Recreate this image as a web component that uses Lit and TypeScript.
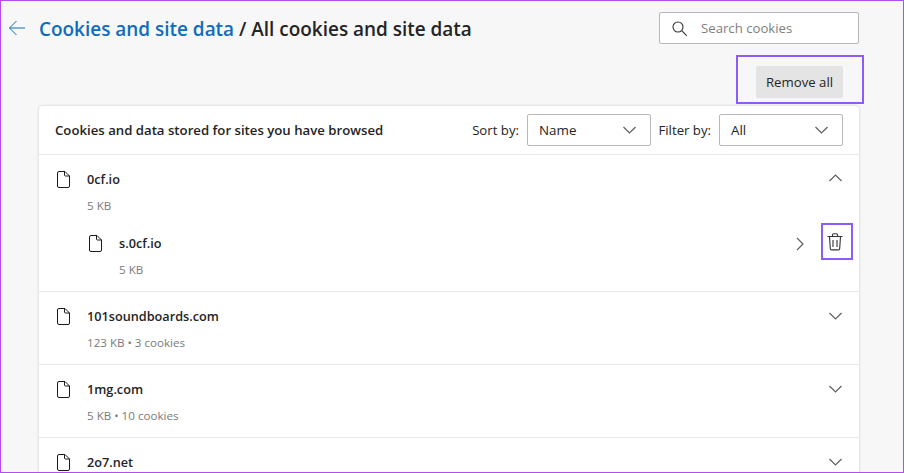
import { LitElement, html, css } from "lit";
import { customElement } from "lit/decorators.js";

const file = html`<svg class="file" width="13" height="17" viewBox="0 0 13 17" fill="none" stroke="#1a1a1a" stroke-width="1"><path d="M.5 2A1.500 1.500 0 0 1 2 .5h6l4.500 4.500v10a1.500 1.500 0 0 1-1.500 1.500H2A1.500 1.500 0 0 1 .5 15z"/><path d="M7.500 .5V4a1 1 0 0 0 1 1h4"/></svg>`;
const chevron = (d: string) => html`<svg width="14" height="14" viewBox="0 0 14 14" fill="none" stroke="#5f5f5f" stroke-width="1.2"><path d=${d}/></svg>`;
const DOWN = "M.5 4 6.500 10l6-6";
const UP = "M.5 10 6.500 4l6 6";
const RIGHT = "M4 1 10 7l-6 6";

const rows = [
  { name: "101soundboards.com", meta: "123 KB • 3 cookies" },
  { name: "1mg.com", meta: "5 KB • 10 cookies" },
  { name: "2o7.net", meta: "" },
];

@customElement("app-root")
export class AppRoot extends LitElement {
  static styles = css`
    :host {
      display: block;
      width: 904px;
      height: 473px;
      box-sizing: border-box;
      border: 1px solid #b44cf0;
      background: #f7f7f7;
      overflow: hidden;
      position: relative;
      font-family: "Open Sans", "Noto Sans", sans-serif;
      color: #242424;
    }
    .top {
      display: flex;
      align-items: center;
      height: 56px;
      padding: 0 44px 0 7px;
    }
    .back { display: flex; margin-right: 13px; margin-top: -2px; }
    h1 {
      flex: 1;
      margin: 0 0 1px;
      font-size: 18.95px;
      font-weight: 600;
      white-space: nowrap;
    }
    h1 a { color: #0f6cbd; }
    .search {
      width: 200px;
      height: 32px;
      box-sizing: border-box;
      border: 1px solid #b8b8b8;
      border-radius: 2px;
      background: #fff;
      display: flex;
      align-items: center;
      gap: 14px;
      padding-left: 12px;
      font-size: 13.2px;
      color: #808080;
      margin-top: -2px;
    }
    .actions {
      display: flex;
      justify-content: flex-end;
      height: 49px;
      padding: 9px 60px 0 0;
      box-sizing: border-box;
    }
    .remove {
      width: 87px;
      height: 32px;
      background: #e4e4e4;
      border-radius: 2px;
      display: flex;
      align-items: center;
      justify-content: center;
      font-size: 13.2px;
    }
    .card {
      margin: 0 44px 0 38px;
      background: #fff;
      border-radius: 4px 4px 0 0;
      box-shadow: 0 0 3px rgba(0, 0, 0, 0.18);
    }
    .head {
      height: 48px;
      display: flex;
      align-items: center;
      padding: 0 16px;
      border-bottom: 1px solid #e8e8e8;
      font-size: 13.2px;
    }
    .head b { flex: 1; font-weight: 600; }
    .lbl { margin-right: 8px; }
    .select {
      width: 124px;
      height: 32px;
      box-sizing: border-box;
      border: 1px solid #b8b8b8;
      border-radius: 2px;
      display: flex;
      align-items: center;
      justify-content: space-between;
      padding: 0 13px 0 11px;
      margin-right: 7.5px;
      font-size: 13.4px;
    }
    .select:last-child { margin-right: 0; }
    .row {
      border-bottom: 1px solid #e8e8e8;
      padding: 0 16px;
    }
    .line {
      display: flex;
      align-items: flex-start;
      height: 72px;
      box-sizing: border-box;
      padding-top: 15px;
    }
    .line.first { height: 64px; }
    .line.sub { padding-left: 32px; }
    .file { flex: none; margin: 1px 17px 0 2px; }
    .text { flex: 1; }
    .name { font-size: 12.7px; font-weight: 600; line-height: 18px; }
    .meta { font-size: 11.6px; color: #7a7a7a; line-height: 15px; margin-top: 10px; }
    .icons { display: flex; align-items: center; gap: 20px; margin-top: 2px; }
    .first .icons { margin-top: 1px; }
    .trash { margin-top: -3px; }
    .mark {
      position: absolute;
      box-sizing: border-box;
      border: 2px solid #8b5cf6;
    }
    .m1 { left: 735px; top: 54px; width: 128px; height: 49px; }
    .m2 { left: 820px; top: 222px; width: 32px; height: 37px; }
  `;

  render() {
    return html`
      <div class="top">
        <span class="back"><svg width="18" height="16" viewBox="0 0 18 16" fill="none" stroke="#0f6cbd" stroke-width="1"><path d="M17 8H1.500M8.500 1 1.500 8l7 7"/></svg></span>
        <h1><a>Cookies and site data</a> / All cookies and site data</h1>
        <div class="search">
          <svg width="15" height="15" viewBox="0 0 15 15" fill="none" stroke="#333" stroke-width="1.1"><circle cx="6" cy="6" r="5"/><path d="m9.700 9.700 5 5"/></svg>
          <span>Search cookies</span>
        </div>
      </div>
      <div class="actions"><div class="remove">Remove all</div></div>
      <div class="card">
        <div class="head">
          <b>Cookies and data stored for sites you have browsed</b>
          <span class="lbl">Sort by:</span>
          <div class="select"><span>Name</span>${chevron(DOWN)}</div>
          <span class="lbl">Filter by:</span>
          <div class="select"><span>All</span>${chevron(DOWN)}</div>
        </div>
        <div class="row">
          <div class="line first">
            ${file}
            <div class="text"><div class="name">0cf.io</div><div class="meta">5 KB</div></div>
            <div class="icons">${chevron(UP)}</div>
          </div>
          <div class="line sub">
            ${file}
            <div class="text"><div class="name">s.0cf.io</div><div class="meta">5 KB</div></div>
            <div class="icons">${chevron(RIGHT)}
              <svg class="trash" width="16" height="18" viewBox="0 0 16 18" fill="none" stroke="#333" stroke-width="1.1"><path d="M.5 3.500h15M5.500 3.500V2a1.200 1.200 0 0 1 1.200-1.200h2.600A1.200 1.200 0 0 1 10.500 2v1.500M2.500 3.500l.8 12a1.500 1.500 0 0 0 1.500 1.400h6.400a1.500 1.500 0 0 0 1.500-1.400l.8-12M6 7v7M10 7v7"/></svg>
            </div>
          </div>
        </div>
        ${rows.map(r => html`
          <div class="row">
            <div class="line">
              ${file}
              <div class="text"><div class="name">${r.name}</div><div class="meta">${r.meta}</div></div>
              <div class="icons">${chevron(DOWN)}</div>
            </div>
          </div>`)}
      </div>
      <div class="mark m1"></div>
      <div class="mark m2"></div>
    `;
  }
}
